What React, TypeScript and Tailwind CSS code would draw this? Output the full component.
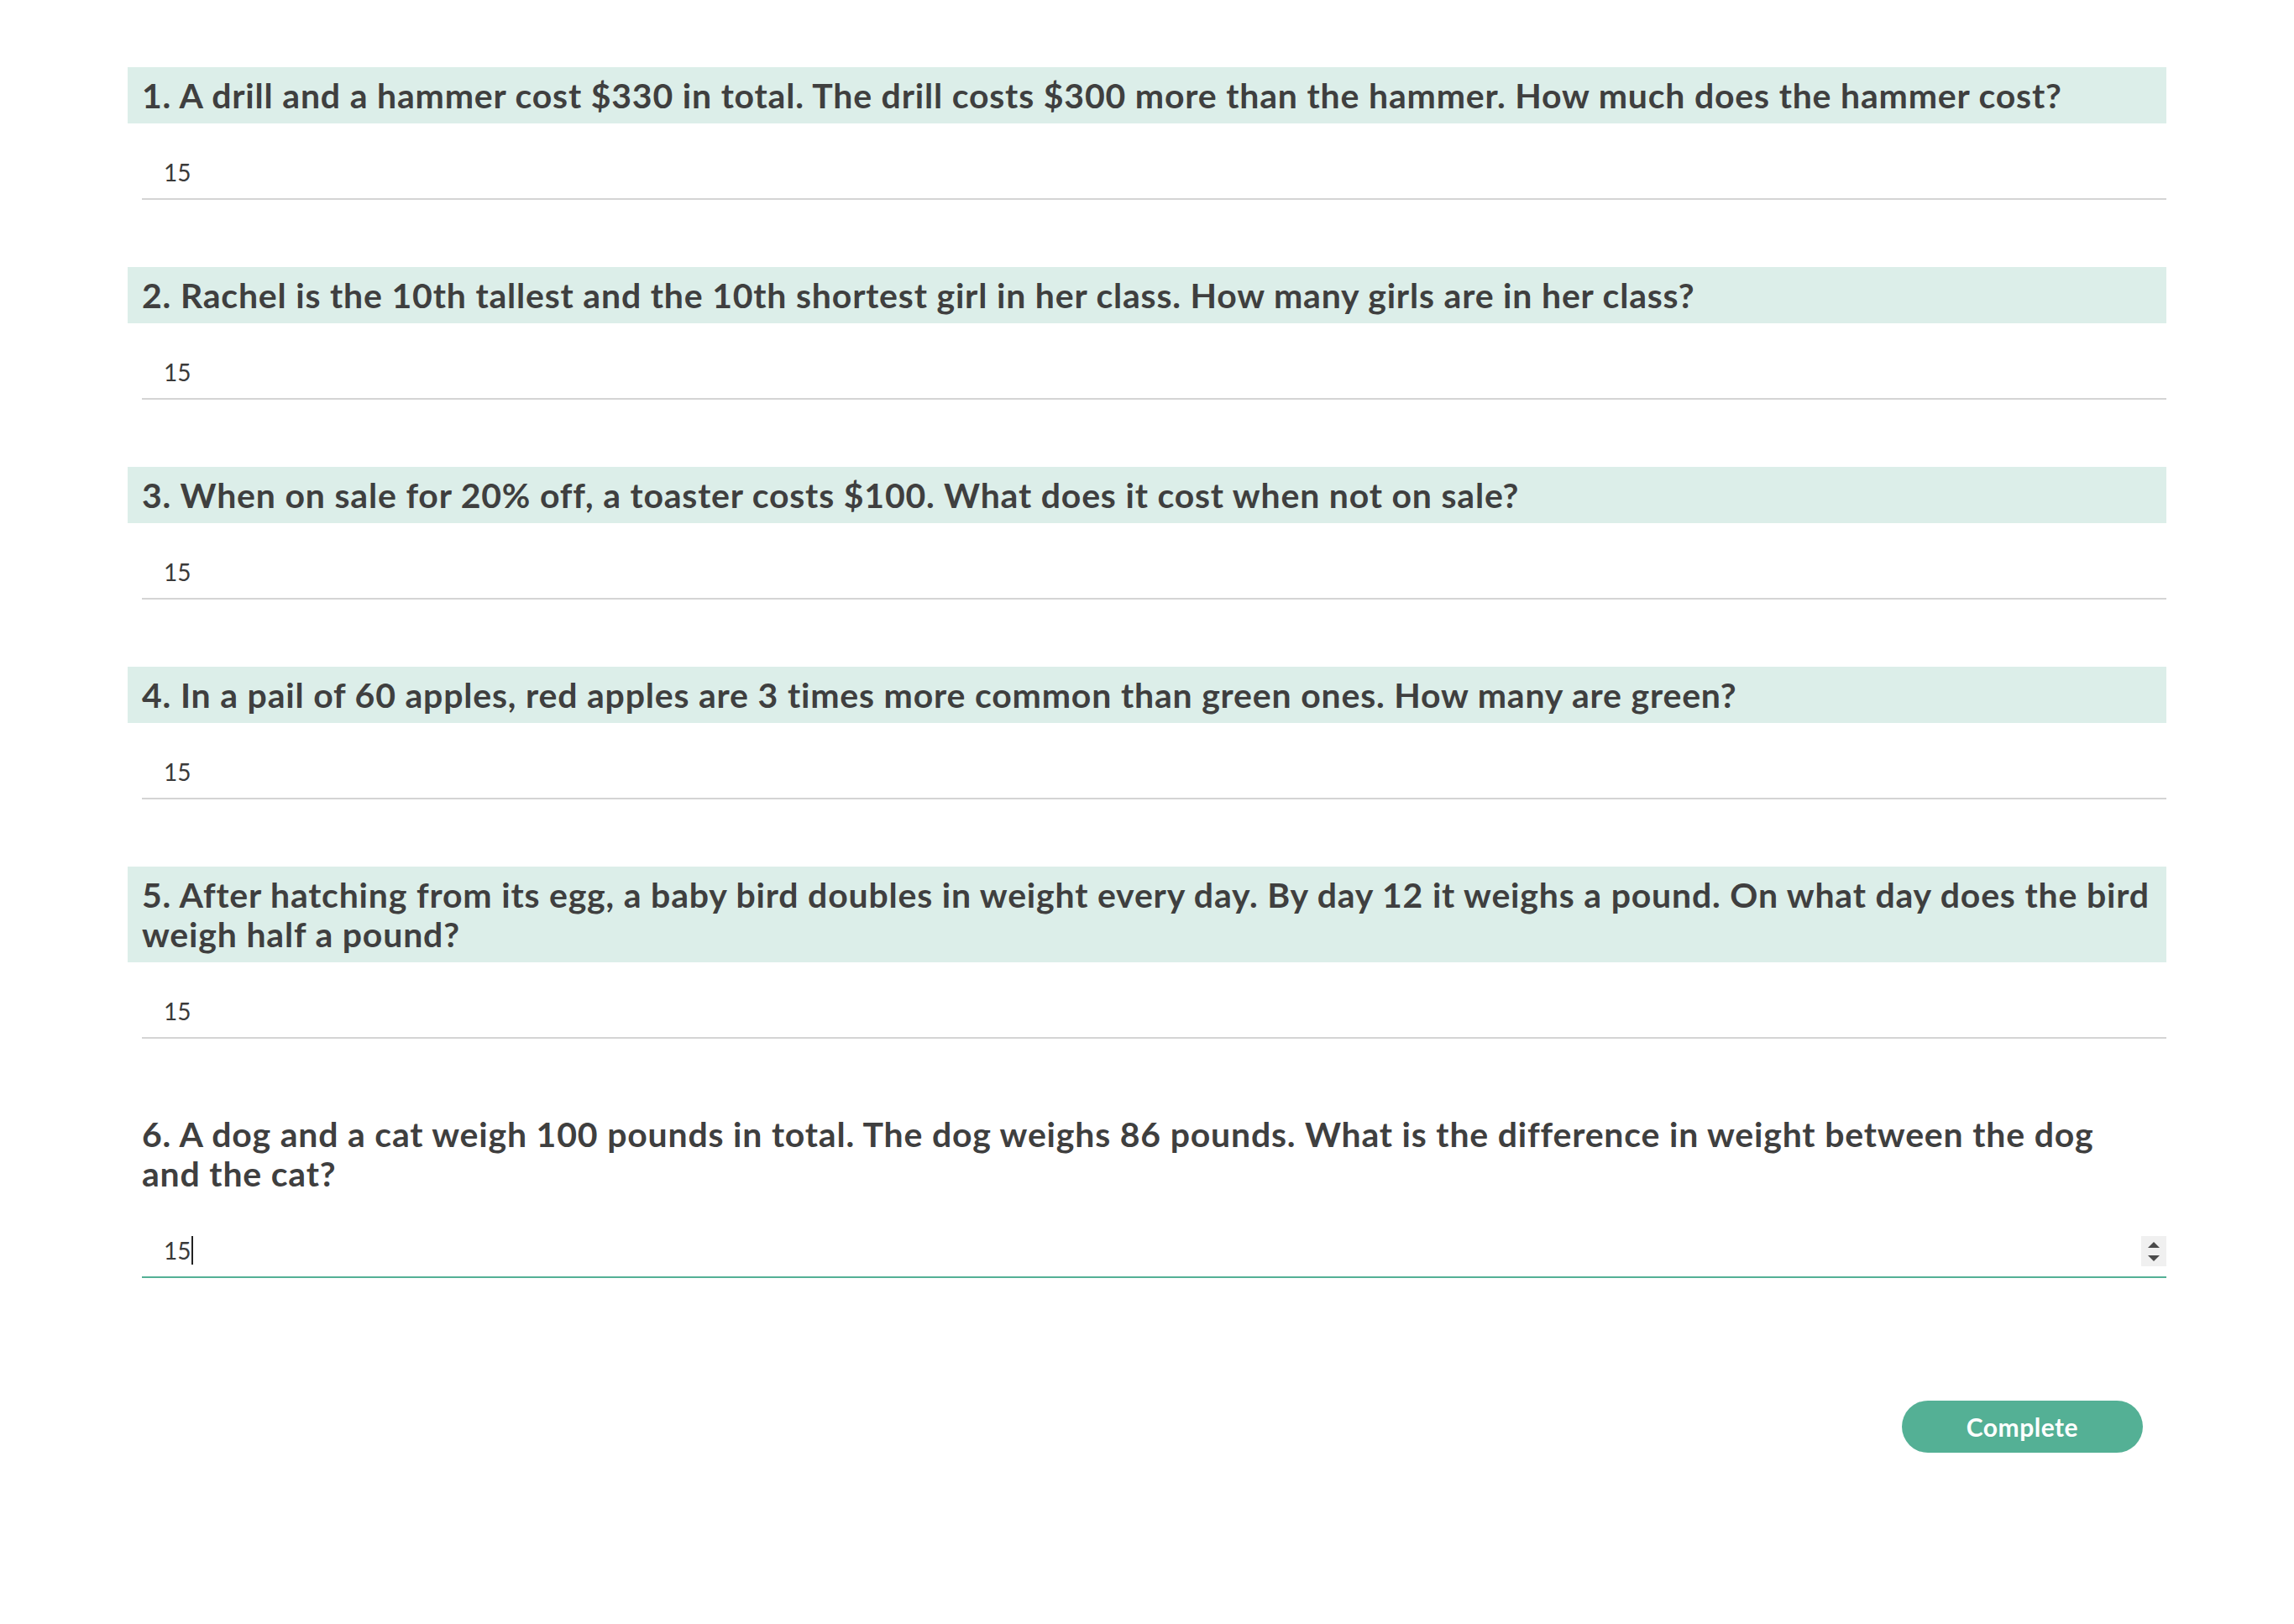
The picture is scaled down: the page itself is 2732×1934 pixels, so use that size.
import React from 'react';

const questions = [
  '1. A drill and a hammer cost $330 in total. The drill costs $300 more than the hammer. How much does the hammer cost?',
  '2. Rachel is the 10th tallest and the 10th shortest girl in her class. How many girls are in her class?',
  '3. When on sale for 20% off, a toaster costs $100. What does it cost when not on sale?',
  '4. In a pail of 60 apples, red apples are 3 times more common than green ones. How many are green?',
  '5. After hatching from its egg, a baby bird doubles in weight every day. By day 12 it weighs a pound. On what day does the bird weigh half a pound?',
  '6. A dog and a cat weigh 100 pounds in total. The dog weighs 86 pounds. What is the difference in weight between the dog and the cat?',
];

function Question({ text, focused }: { text: string; focused: boolean }) {
  return (
    <div className="mb-[80px]">
      <div
        className={`px-[17px] py-[10px] text-[41px] leading-[47px] tracking-[0.8px] font-bold text-[#3f3f3f] ${focused ? '' : 'bg-[#dceee9]'}`}
      >
        {text}
      </div>
      <div
        className={`relative ml-[17px] mt-[27px] h-[64px] flex items-center pl-[26px] text-[28px] text-[#3a3a3a] border-b-2 ${focused ? 'border-[#54b095]' : 'border-[#d4d4d4]'}`}
      >
        <span>15</span>
        {focused && <span className="ml-[1px] inline-block w-[2px] h-[34px] bg-[#222]" />}
        {focused && (
          <div className="absolute right-0 top-[14px] w-[30px] h-[36px] bg-[#f0f0f0] flex flex-col items-center justify-center gap-[9px]">
            <svg width="14" height="7" viewBox="0 0 14 7"><path d="M7 0 L14 7 L0 7 Z" fill="#4a4a4a" /></svg>
            <svg width="14" height="7" viewBox="0 0 14 7"><path d="M0 0 L14 0 L7 7 Z" fill="#4a4a4a" /></svg>
          </div>
        )}
      </div>
    </div>
  );
}

export default function App() {
  return (
    <div className="min-h-screen bg-white" style={{ fontFamily: 'Lato, "Open Sans", sans-serif' }}>
      <div className="w-[2428px] mx-auto pt-[80px]">
        {questions.map((q, i) => (
          <Question key={i} text={q} focused={i === questions.length - 1} />
        ))}
        <div className="flex justify-end pr-[28px] mt-[146px]">
          <button className="w-[287px] h-[62px] rounded-full bg-[#54b095] text-white text-[30px] font-bold tracking-[0.5px]">
            Complete
          </button>
        </div>
      </div>
    </div>
  );
}
